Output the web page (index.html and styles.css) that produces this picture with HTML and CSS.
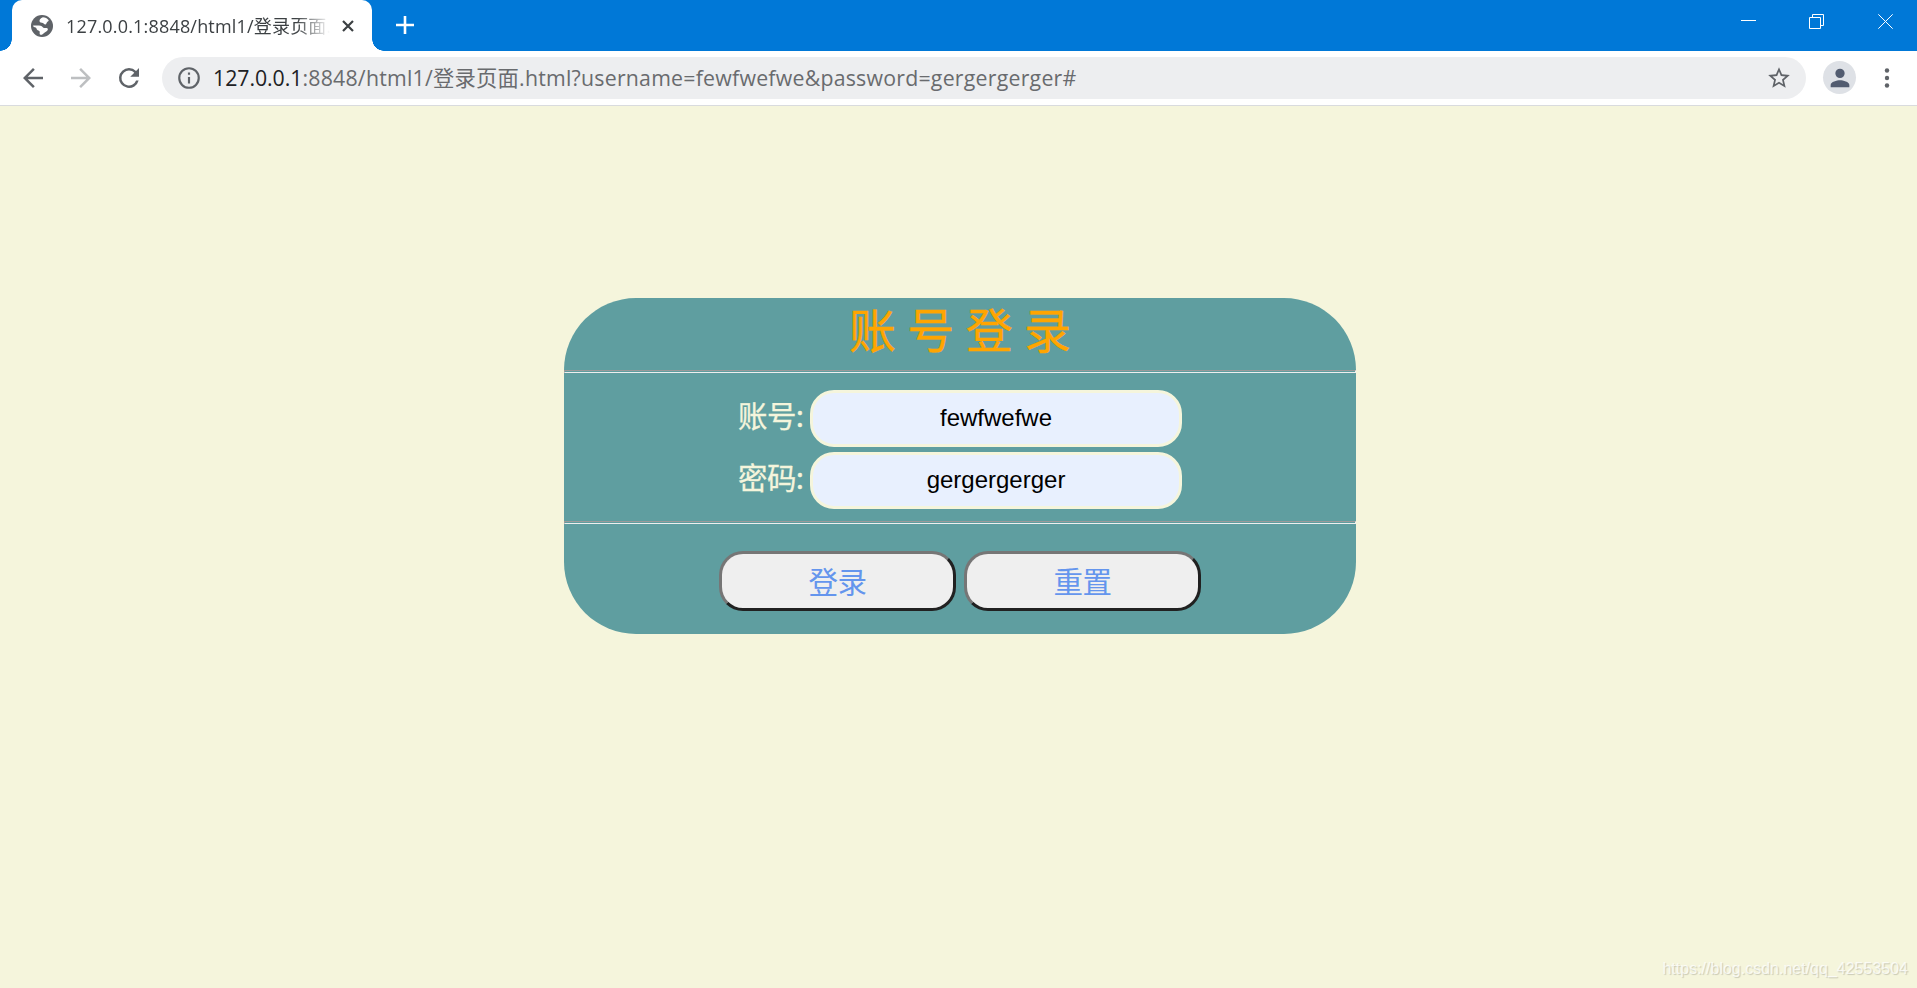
FILE: index.html
```
<!DOCTYPE html>
<html lang="zh-CN">
<head>
    <meta charset="UTF-8" />
    <title>登录页面</title>
    <link rel="stylesheet" href="styles.css">
</head>
<body>
<!-- 标签栏 -->
<header class="tab-strip">
    <div class="tab">
        <svg class="globe" viewBox="0 0 24 24"><circle cx="12" cy="12" r="12"/><path d="M13 2.400C10.500 3.500 9 5 9.300 6.800C9.700 8.500 11.600 8.300 13 8.800C14.300 9.300 14.200 10.400 15.600 10.400C17 10.300 16.700 8.500 17.700 7.600C18.600 6.900 19.300 6.300 19.300 5.600C17.700 3.600 15.500 2.500 13 2.400ZM2.300 11.500C5 11.300 8.500 11.200 10.500 11.700C12.500 12.200 12.800 14 14.500 14.300C16.300 14.600 18 14 18.400 15.300C18.800 17 16.500 18 15 19C13.500 20 12.500 21.700 10.500 21.600C9.200 21.300 9.300 19.500 9.600 18.500C9.800 17.300 8.300 16.900 7.300 16.500C5.600 15.800 6.500 14.300 5 13.700C4 13.300 2.300 13.200 2.300 11.500Z"/></svg>
        <span class="tab-title">127.0.0.1:8848/html1/登录页面.</span>
        <svg class="tab-close" viewBox="0 0 12 12"><path d="M1 1l10 10M11 1L1 11"/></svg>
    </div>
    <svg class="new-tab" viewBox="0 0 18 18"><path d="M9 0v18M0 9h18"/></svg>
    <div class="window-buttons">
        <svg viewBox="0 0 15 15"><path d="M0 6.500h15"/></svg>
        <svg viewBox="0 0 15 15"><path d="M.5 3.500h11v11H.5zM3.500 3.500v-3h11v11h-3"/></svg>
        <svg viewBox="0 0 15 15"><path d="M.3.3l14.400 14.400M14.700.3L.3 14.700"/></svg>
    </div>
</header>

<!-- 地址栏 -->
<nav class="toolbar">
    <svg class="nav-icon" viewBox="0 0 24 24"><path d="M20 11H7.830l5.590-5.590L12 4l-8 8 8 8 1.410-1.410L7.830 13H20z"/></svg>
    <svg class="nav-icon disabled" viewBox="0 0 24 24"><path d="M12 4l-1.410 1.410L16.170 11H4v2h12.170l-5.580 5.590L12 20l8-8z"/></svg>
    <svg class="nav-icon" viewBox="0 0 24 24"><path d="M17.650 6.350A7.960 7.960 0 0 0 12 4a8 8 0 1 0 7.730 10h-2.080A6 6 0 1 1 12 6c1.660 0 3.140.69 4.220 1.780L13 11h7V4z"/></svg>
    <div class="address">
        <svg class="info" viewBox="0 0 24 24"><path d="M11 7h2v2h-2zm0 4h2v6h-2zm1-9a10 10 0 1 0 0 20 10 10 0 0 0 0-20zm0 18a8 8 0 1 1 0-16 8 8 0 0 1 0 16z"/></svg>
        <span class="url"><span class="host">127.0.0.1</span>:8848/html1/登录页面.html?username=fewfwefwe&amp;password=gergergerger#</span>
        <svg class="star" viewBox="0 0 24 24"><path d="M22 9.240l-7.190-.62L12 2 9.190 8.630 2 9.240l5.460 4.730L5.820 21 12 17.270 18.180 21l-1.630-7.030zM12 15.400l-3.760 2.270 1-4.280-3.320-2.880 4.380-.38L12 6.100l1.710 4.040 4.380.38-3.320 2.880 1 4.280z"/></svg>
    </div>
    <div class="avatar">
        <svg viewBox="0 0 24 24"><path d="M12 12a4 4 0 1 0 0-8 4 4 0 0 0 0 8zm0 2c-2.670 0-8 1.340-8 4v2h16v-2c0-2.660-5.330-4-8-4z"/></svg>
    </div>
    <svg class="menu" viewBox="0 0 6 20"><circle cx="3" cy="2.500" r="2.200"/><circle cx="3" cy="10" r="2.200"/><circle cx="3" cy="17.500" r="2.200"/></svg>
</nav>

<main>
    <form class="login">
        <h1>账 号 登 录</h1>
        <hr>
        <div class="fields">
            <div class="field">
                <label for="username">账号:</label>
                <input type="text" id="username" name="username" value="fewfwefwe">
            </div>
            <div class="field">
                <label for="password">密码:</label>
                <input type="text" id="password" name="password" value="gergergerger">
            </div>
        </div>
        <hr>
        <div class="buttons">
            <button type="submit">登录</button>
            <button type="reset">重置</button>
        </div>
    </form>
    <div class="watermark">https://blog.csdn.net/qq_42553504</div>
</main>
</body>
</html>
```
FILE: styles.css
```
* { box-sizing: border-box; }
body {
    margin: 0;
    height: 100vh;
    display: flex;
    flex-direction: column;
    overflow: hidden;
    background: beige;
    font-family: "Open Sans", "Noto Sans CJK SC", sans-serif;
}
svg { display: block; flex: none; }

.tab-strip {
    height: 51px;
    flex: none;
    display: flex;
    background: #0078d7;
    padding-left: 12px;
}
.tab {
    position: relative;
    width: 360px;
    display: flex;
    align-items: center;
    padding-left: 19px;
    background: #fff;
    border-radius: 10px 10px 0 0;
}
/* 标签底部两侧的圆角 */
.tab::before,
.tab::after {
    content: "";
    position: absolute;
    bottom: 0;
    width: 12px;
    height: 12px;
}
.tab::before {
    left: -12px;
    background: radial-gradient(circle at 0 0, transparent 11.5px, #fff 12px);
}
.tab::after {
    right: -12px;
    background: radial-gradient(circle at 100% 0, transparent 11.5px, #fff 12px);
}
.globe { width: 22px; height: 22px; }
.globe circle { fill: #5f6368; }
.globe path { fill: #fff; }
.tab-title {
    width: 267px;
    margin-left: 13px;
    white-space: nowrap;
    font-size: 18px;
    line-height: 26px;
    letter-spacing: 0.18px;
    color: #3c4043;
    -webkit-mask-image: linear-gradient(to right, #000 230px, transparent 264px);
    mask-image: linear-gradient(to right, #000 230px, transparent 264px);
}
.tab-close {
    width: 12px;
    height: 12px;
    margin-left: 9px;
    fill: none;
    stroke: #3c4043;
    stroke-width: 2.2;
}
.new-tab {
    width: 18px;
    height: 18px;
    margin: 16px 0 0 24px;
    stroke: #fff;
    stroke-width: 2.6;
}
.window-buttons {
    display: flex;
    gap: 53px;
    margin: 14px 24px 0 auto;
}
.window-buttons svg {
    width: 15px;
    height: 15px;
    fill: none;
    stroke: #fff;
}
.window-buttons svg:nth-child(2) { margin-right: 1px; }

.toolbar {
    height: 55px;
    flex: none;
    display: flex;
    align-items: center;
    padding: 0 27px 1px 18px;
    background: #fff;
    border-bottom: 1px solid #d9dbde;
}
.nav-icon {
    width: 30px;
    height: 30px;
    margin-right: 18px;
    fill: #5f6368;
}
.nav-icon.disabled { fill: #bdbfc1; }
.address {
    flex: 1;
    height: 42px;
    display: flex;
    align-items: center;
    padding: 0 14px;
    border-radius: 21px;
    background: #edeef0;
}
.info { width: 26px; height: 26px; fill: #5f6368; }
.url {
    flex: 1;
    margin-left: 11px;
    white-space: nowrap;
    font-size: 21.3px;
    line-height: 30px;
    letter-spacing: 0.23px;
    color: #696b6e;
}
.host { color: #202124; letter-spacing: -0.05px; }
.star { width: 26px; height: 26px; fill: #5f6368; }
.avatar {
    width: 33px;
    height: 33px;
    margin: 0 28px 0 17px;
    display: flex;
    align-items: center;
    justify-content: center;
    border-radius: 50%;
    background: #dee1e6;
}
.avatar svg { width: 28px; height: 28px; fill: #525c70; }
.menu { width: 6px; height: 20px; fill: #5f6368; }

main {
    flex: 1;
    position: relative;
}
.login {
    width: 792px;
    height: 336px;
    margin: 192px 0 0 564px;
    border-radius: 72px;
    background: cadetblue;
}
h1 {
    height: 72px;
    margin: 0;
    font: 47px/59px "Noto Sans CJK SC", sans-serif;
    word-spacing: 0.8px;
    text-align: center;
    color: orange;
    -webkit-text-stroke: 0.4px orange;
}
hr {
    height: 3px;
    margin: 0;
    border: 1px solid #9a9a9a;
    border-right-color: #eee;
    border-bottom-color: #eee;
}
.fields {
    height: 148px;
    display: flex;
    flex-direction: column;
    gap: 5px;
    padding: 17px 0 0 174px;
}
.field { display: flex; }
label {
    width: 72px;
    font: 29.5px/48px "Noto Sans CJK SC", sans-serif;
    letter-spacing: -0.6px;
    color: beige;
    -webkit-text-stroke: 0.3px beige;
}
input {
    width: 372px;
    height: 57px;
    padding: 0 0 1px;
    border: 3px solid beige;
    border-radius: 24px;
    outline: none;
    background: #e8f0fe;
    font: 24px "Liberation Sans", Arial, sans-serif;
    text-align: center;
    color: #000;
}
.buttons {
    display: flex;
    gap: 8px;
    padding: 27px 0 0 155px;
}
button {
    width: 237px;
    height: 60px;
    padding: 0 0 2px;
    border: 3px solid #767676;
    border-right-color: #212121;
    border-bottom-color: #212121;
    border-radius: 24px;
    background: #efefef;
    font: 29.5px/52px "Noto Sans CJK SC", sans-serif;
    letter-spacing: -0.4px;
    color: cornflowerblue;
}
.watermark {
    position: absolute;
    right: 9px;
    bottom: 9px;
    font: 16px/20px "Liberation Sans", Arial, sans-serif;
    color: rgba(255, 255, 255, 0.75);
    text-shadow: 1px 1px 1px rgba(0, 0, 0, 0.18);
}
```
